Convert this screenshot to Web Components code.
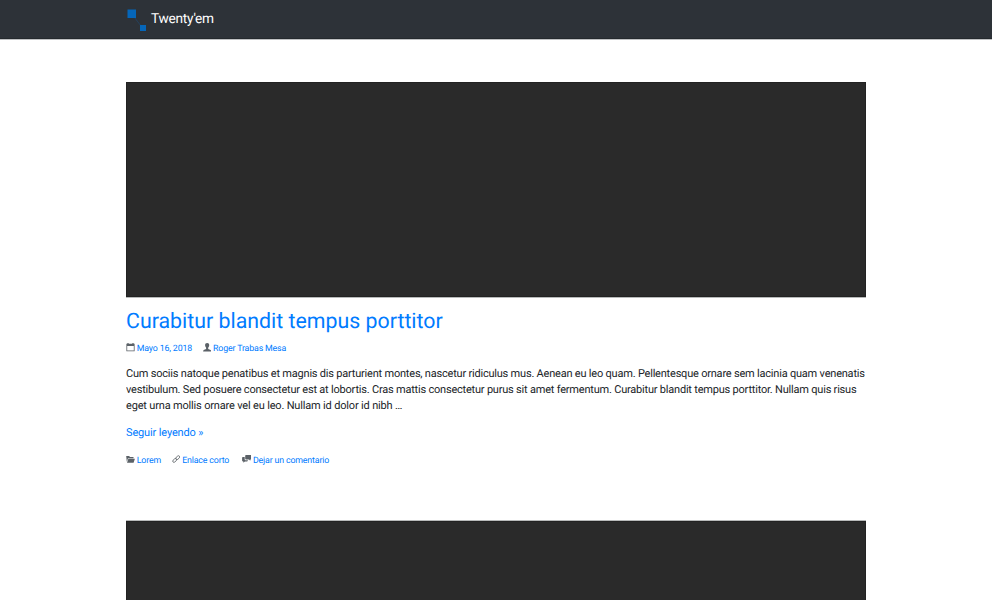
<!DOCTYPE html>
<html lang="es"><head><meta charset="utf-8"><title>Twenty'em</title>
<style>body{margin:0;background:#fff;font:11px/16px Roboto,sans-serif;letter-spacing:-.206px;color:#212529;text-rendering:geometricPrecision}
.second{box-shadow:0 -1px #b8baba}.last{letter-spacing:-.172px}</style></head>
<body>
<site-header>Twenty'em</site-header>
<blog-list>
<blog-post><span slot="title">Curabitur blandit tempus porttitor</span><span slot="date">Mayo 16, 2018</span><span slot="author">Roger Trabas Mesa</span><span slot="text">Cum sociis natoque penatibus et magnis dis parturient montes, nascetur ridiculus mus. Aenean eu leo quam. Pellentesque ornare sem lacinia quam venenatis<br>vestibulum. Sed posuere consectetur est at lobortis. Cras mattis consectetur purus sit amet fermentum. Curabitur blandit tempus porttitor. Nullam quis risus<br><span class="last">eget urna mollis ornare vel eu leo. Nullam id dolor id nibh …</span></span><span slot="category">Lorem</span></blog-post>
<post-image class="second"></post-image>
</blog-list>
<script>
function define(name, html){customElements.define(name,class extends HTMLElement{constructor(){super();this.attachShadow({mode:'open'}).innerHTML=html;}});}
define('site-header',`<style>:host{display:block;box-sizing:border-box;height:40px;background:#2d3238;border-bottom:1px solid #bfc1c3;box-shadow:inset 0 -1px #24292d;color:#fff}
div{width:740px;height:39px;margin:auto;display:flex;align-items:center;font-size:13.700px;letter-spacing:-.26px}span{padding-bottom:2px}svg{width:25px;height:39px;flex:none}</style>
<div><svg viewBox="0 0 25 39" fill="#0566b9"><path d="M8.5 17.5L15 26" stroke="#17528a" stroke-width=".45"/><path d="M1.5 9.5h8.500v8.500H1.500zM14 25h6v6h-6z"/></svg><span><slot></slot></span></div>`);
define('blog-list',`<style>:host{display:flex;flex-direction:column;gap:55px;width:740px;height:560px;margin:auto;padding-top:42px;box-sizing:border-box;overflow:hidden}</style><slot></slot>`);
define('post-image',`<style>:host{display:block;box-sizing:border-box;height:215px;flex:none;background:#2a2a2a;border:1px solid #222}</style>`);
define('meta-link',`<style>:host{display:flex;color:#007bff;font-size:8.800px;letter-spacing:-.150px;line-height:12px;white-space:nowrap;gap:1.700px}</style><slot name="icon"></slot><slot></slot>`);
define('blog-post',`<style>:host{display:block;height:384px;flex:none}post-image{box-shadow:0 1px #b8baba}h2{font:400 21.333px/26px Roboto,sans-serif;letter-spacing:0;color:#007bff;margin:12px 0 8px}.m{display:flex;gap:11px}p{margin:11px 0 10.500px;white-space:nowrap}a{display:block;color:#007bff;letter-spacing:-.140px;margin-bottom:14px}svg{display:block;height:9px;flex:none;margin-top:0;fill:#5b6167}</style>
<post-image></post-image><h2><slot name="title"></slot></h2>
<div class="m">
<meta-link><svg slot="icon" width="9" viewBox="0 0 9 9"><path fill-rule="evenodd" d="M.4.800h1V0h1.200v.8h3.800V0h1.200v.8h1v7.400h-8.200zM1.200 3.100v4.300h6.600V3.100z"/></svg><slot name="date"></slot></meta-link>
<meta-link><svg slot="icon" width="8.300" viewBox="0 0 8.3 9"><path d="M4.150 0C5.600 0 6.300 1 6.200 2.300C6.100 3.700 5.500 4.200 5.200 4.700V6L7.600 7C8.100 7.300 8.200 8.600 8.200 8.600H.1S.2 7.300.7 7L3.100 6V4.700C2.800 4.200 2.200 3.700 2.100 2.300C2 1 2.700 0 4.150 0z"/></svg><slot name="author"></slot></meta-link></div>
<p><slot name="text"></slot></p><a>Seguir leyendo »</a>
<div class="m">
<meta-link><svg slot="icon" width="9" viewBox="0 0 9 9"><path d="M.2 1h3l.7 1h3.600v1.200H2L.8 6.700zM2.400 3.700h6.500L7.600 7.700H1z"/></svg><slot name="category"></slot></meta-link>
<meta-link><svg slot="icon" width="8.500" viewBox="0 0 9 9"><g fill="none" stroke="#666b70" stroke-width=".9" transform="rotate(-42 4.500 4)"><rect x="-.1" y="2.700" width="4.900" height="2.600" rx="1.300"/><rect x="4.100" y="2.700" width="4.900" height="2.600" rx="1.300"/></g></svg>Enlace corto</meta-link>
<meta-link style="margin-left:1.500px"><svg slot="icon" width="9.500" viewBox="0 0 9.5 9"><path d="M4 0h4.500q.8 0 .8.800v3q0 .8-.8.800h-.2v1.200L7 4.600H4q-.8 0-.8-.8v-3Q3.200 0 4 0z"/><path d="M.9 2h1.800v2.300q0 .9.900.9h2.300v.4q0 .8-.8.800H2.900L1.400 7.800V6.400H.9q-.8 0-.8-.8V2.800Q.1 2 .9 2z"/></svg>Dejar un comentario</meta-link></div>`);
</script></body></html>
